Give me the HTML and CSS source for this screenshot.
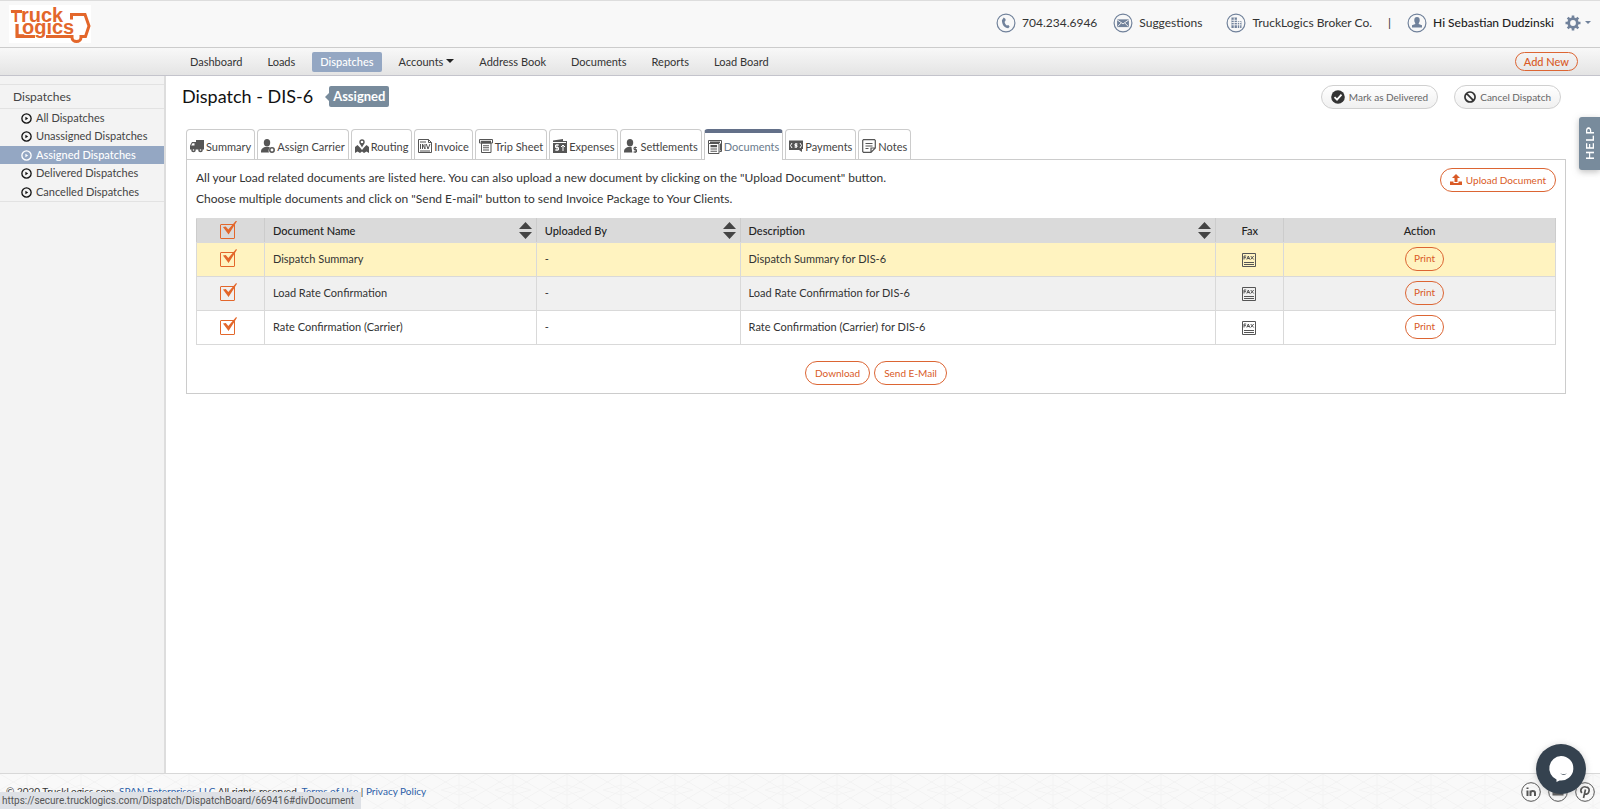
FILE: index.html
```html
<!DOCTYPE html>
<html lang="en">
<head>
<meta charset="utf-8">
<title>TruckLogics - Dispatch DIS-6</title>
<link rel="stylesheet" href="styles.css">
</head>
<body>
<svg class="sprite" aria-hidden="true">
  <symbol id="truck" viewBox="0 0 14 14"><path d="M6 1h8v9.500H6z"/><path d="M0 10.500V6.500L2 3h4v7.500z"/><path class="cut" d="M1.200 6.500l1.300-2.300h2v2.300z"/><circle cx="3.500" cy="11" r="2.300"/><circle cx="10.500" cy="11" r="2.300"/><circle class="cut" cx="3.500" cy="11" r=".8"/><circle class="cut" cx="10.500" cy="11" r=".8"/></symbol>
  <symbol id="carrier" viewBox="0 0 14 14"><ellipse cx="6" cy="3.700" rx="3.200" ry="3.700"/><path d="M0 13.500C0 9.500 1.500 9 4 8h4l1 .8a4 4 0 0 0-1 4.700z"/><circle cx="11" cy="11" r="2.200" fill="none" stroke="currentColor" stroke-width="1.500"/></symbol>
  <symbol id="route" viewBox="0 0 14 14"><path d="M0 8l2.500-2L5 8.500 7 11l2-2.500L11.500 6 14 8v6l-2.500-1.500L9 14l-2-1.500L5 14l-2.500-1.500L0 14z"/><circle cx="7" cy="3" r="2" fill="none" stroke="currentColor" stroke-width="1.400"/><path d="M4.800 4.500h4.400L7 8.500z"/></symbol>
  <symbol id="invoice" viewBox="0 0 14 14"><path d="M.5.500h10l3 3v10H.5zM10.500.500v3h3" fill="none" stroke="currentColor"/><path d="M2 3h6M2 12h10" stroke="currentColor"/><path d="M2.500 5v5M4.500 10V5L7 10V5M8.300 5l1.700 5 2-5" fill="none" stroke="currentColor"/></symbol>
  <symbol id="sheet" viewBox="0 0 14 14"><path d="M.5.500h13v3.500h-1.500v9.500H2.500V4h-2z" fill="none" stroke="currentColor"/><path d="M1.500 1.800h10.500v3H2.500zM4 6.200h6v1H4zM4 8.300h6v1H4zM4 10.500h6v1H4z"/></symbol>
  <symbol id="expense" viewBox="0 0 14 14"><path d="M0 1.500L10 0v2h4v12H0z"/><path class="line" d="M0 3.500h13M6 6H2.500v2.500H5.500V11H2M4 5v7M10 12V6M8 8l2-2 2 2"/></symbol>
  <symbol id="settle" viewBox="0 0 14 14"><ellipse cx="6" cy="3.700" rx="3.200" ry="3.700"/><path d="M0 13.500C0 9.500 1.500 9 4 8h3.500l.8 5.500z"/><path d="M12.800 8.500H10v2h2.500v2.500H9.500M11.200 7.500v6.500" fill="none" stroke="currentColor"/></symbol>
  <symbol id="docs" viewBox="0 0 14 14"><path d="M.5 3.500h10.500v10H.5zM.5 3.500v-3h13v11h-2" fill="none" stroke="currentColor"/><path d="M2 1.500h10v1.500H2zM2.500 5H9v2.200H2.500zM2.500 8.500H9v1H2.500zM2.500 10.700H9v1H2.500zM12 3.500h1v7h-1z"/></symbol>
  <symbol id="pay" viewBox="0 0 14 14"><path d="M0 1.500h14V10h-1v3l-3-2H0z"/><path class="line" d="M3 4L1.500 6.500 3 9M11 4l1.500 2.500L11 9M8.500 5H6v1.500h2V8H5.500M7 4v5"/></symbol>
  <symbol id="note" viewBox="0 0 14 14"><path d="M1.500.700h11l.8.800v7.500l-4.300 4.300H1.500L.7 12.500v-11zM13.300 9H9v4.300M3.500 4.500h7M3.500 7h7M3.500 9.500h3" fill="none" stroke="currentColor" stroke-width="1.200"/></symbol>
  <symbol id="bullet" viewBox="0 0 10 10"><circle cx="5" cy="5" r="4.200" fill="none" stroke="currentColor" stroke-width="1.200"/><path d="M4 3.500L6.500 5 4 6.500z"/></symbol>
  <symbol id="sort" viewBox="0 0 13 17"><path d="M6.500 0l6.500 7H0zM0 10h13l-6.500 7z"/></symbol>
  <symbol id="fax" viewBox="0 0 14 14"><path d="M.5.500h13v13H.5z" fill="none" stroke="currentColor"/><path d="M2 6.500V3h2.200M2 4.700h2M4.800 6.500L6.300 3l1.500 3.500M5.300 5.500h2M8.700 3l3 3.500M11.700 3l-3 3.500M2 9.500h10M2 11.500h10" fill="none" stroke="currentColor"/></symbol>
</svg>

<header class="top">
  <a class="logo" href="#" aria-label="TruckLogics">
    <svg viewBox="0 0 82 38" width="82" height="38"><rect class="logo-bg" width="82" height="38"/><text x="2" y="17"><tspan class="cap">T</tspan><tspan x="12">ruck</tspan></text><text x="6" y="31"><tspan class="cap">L</tspan><tspan x="13" y="29">ogics</tspan></text><path d="M2 6.500h11M8 19v12.500h18M37 31.500h26v1a4.500 4 0 0 0 9 0v-1h4.500L80 21 76 9.500H62.500v5"/></svg>
  </a>
  <div class="links">
    <a class="link phone" href="#"><svg class="round" viewBox="0 0 22 22"><circle class="ring" cx="11" cy="11" r="9.800"/><path d="M8.500 5l2 1.500v2l-1 1.200c0 1.500 1 3 2.500 4l1.600-.4 1.400 1.700-1.500 1.800c-4 0-7-4-7-8.800z"/></svg>704.234.6946</a>
    <a class="link suggest" href="#"><svg class="round" viewBox="0 0 22 22"><circle class="ring" cx="11" cy="11" r="9.800"/><path d="M4.500 7h13v8.500h-13z"/><path class="line" d="M4.500 7.500L11 12l6.500-4.500M5 15l4-4M17 15l-4-4"/></svg>Suggestions</a>
    <a class="link company" href="#"><svg class="round" viewBox="0 0 22 22"><circle class="ring" cx="11" cy="11" r="9.800"/><path d="M6 5h6v11.500H6zM13 9h4v7.500h-4z"/><path class="line" d="M6 8h6M6 10.500h11M6 13h11M9 5v11.500M15 9v7.500"/></svg>TruckLogics Broker Co.</a>
    <span class="bar">|</span>
    <a class="link user" href="#"><svg class="round" viewBox="0 0 22 22"><circle class="ring" cx="11" cy="11" r="9.800"/><path d="M8 8a3 3.500 0 0 1 6 0c0 2-1 2.500-1.200 4l3.700 1.500v2.500h-11v-2.500L9.200 12C9 10.500 8 10 8 8z"/></svg>Hi Sebastian Dudzinski</a>
    <button class="gear" type="button" aria-label="Settings"><svg viewBox="0 0 16 16" width="16" height="16"><circle cx="8" cy="8" r="4.300" fill="none" stroke="currentColor" stroke-width="2.800"/><path d="M8 .5v3M8 12.500v3M.5 8h3M12.500 8h3M2.700 2.700l2 2M11.300 11.300l2 2M2.700 13.300l2-2M11.300 4.700l2-2" stroke="currentColor" stroke-width="2.600"/></svg><i class="caret"></i></button>
  </div>
</header>

<nav class="nav" aria-label="Main">
  <a href="#">Dashboard</a><a href="#">Loads</a><a class="on" href="#">Dispatches</a><a href="#">Accounts<i class="caret"></i></a><a href="#">Address Book</a><a href="#">Documents</a><a href="#">Reports</a><a href="#">Load Board</a>
  <button class="pill add" type="button">Add New</button>
</nav>

<div class="body">
  <aside class="side">
    <h2>Dispatches</h2>
    <ul>
      <li><a href="#"><svg><use href="#bullet"/></svg>All Dispatches</a></li>
      <li><a href="#"><svg><use href="#bullet"/></svg>Unassigned Dispatches</a></li>
      <li><a class="on" href="#"><svg><use href="#bullet"/></svg>Assigned Dispatches</a></li>
      <li><a href="#"><svg><use href="#bullet"/></svg>Delivered Dispatches</a></li>
      <li><a href="#"><svg><use href="#bullet"/></svg>Cancelled Dispatches</a></li>
    </ul>
  </aside>
  <main class="main">
    <div class="title">
      <h1>Dispatch - DIS-6</h1><span class="badge">Assigned</span>
      <div class="acts">
        <button class="pill grey" type="button"><svg viewBox="0 0 14 14" width="14" height="14"><circle cx="7" cy="7" r="6.800"/><path class="tick" d="M3.500 7.200l2.500 2.500 4.500-5"/></svg>Mark as Delivered</button>
        <button class="pill grey" type="button"><svg viewBox="0 0 12 12" width="12" height="12"><path d="M2.200 2.200l7.600 7.600M6 1a5 5 0 1 0 .01 0z" fill="none" stroke="currentColor" stroke-width="1.700"/></svg>Cancel Dispatch</button>
      </div>
    </div>
    <div class="tabs">
      <a href="#"><svg><use href="#truck"/></svg>Summary</a><a href="#"><svg><use href="#carrier"/></svg>Assign Carrier</a><a href="#"><svg><use href="#route"/></svg>Routing</a><a href="#"><svg><use href="#invoice"/></svg>Invoice</a><a href="#"><svg><use href="#sheet"/></svg>Trip Sheet</a><a href="#"><svg><use href="#expense"/></svg>Expenses</a><a href="#"><svg><use href="#settle"/></svg>Settlements</a><a class="on" href="#"><svg><use href="#docs"/></svg>Documents</a><a href="#"><svg><use href="#pay"/></svg>Payments</a><a href="#"><svg><use href="#note"/></svg>Notes</a>
    </div>
    <section class="panel">
      <div class="intro">
        <p>All your Load related documents are listed here. You can also upload a new document by clicking on the "Upload Document" button.<br>Choose multiple documents and click on "Send E-mail" button to send Invoice Package to Your Clients.</p>
        <button class="pill upload" type="button"><svg viewBox="0 0 12 12" width="12" height="12"><path d="M6 0l4 4H7.500v4h-3V4H2zM0 7.500h3.500V9h5V7.500H12V11H0z"/></svg>Upload Document</button>
      </div>
      <table>
        <colgroup><col class="c5"><col class="c20"><col class="c15"><col class="c35"><col class="c5"><col class="c20"></colgroup>
        <thead><tr><th class="mid"><input type="checkbox" checked aria-label="Select all"></th><th><div class="sortable">Document Name<svg><use href="#sort"/></svg></div></th><th><div class="sortable">Uploaded By<svg><use href="#sort"/></svg></div></th><th><div class="sortable">Description<svg><use href="#sort"/></svg></div></th><th class="mid">Fax</th><th class="mid">Action</th></tr></thead>
        <tbody>
          <tr class="hot"><td class="mid"><input type="checkbox" checked aria-label="Dispatch Summary"></td><td>Dispatch Summary</td><td>-</td><td>Dispatch Summary for DIS-6</td><td class="mid"><svg class="fax"><use href="#fax"/></svg></td><td class="mid"><button class="pill" type="button">Print</button></td></tr>
          <tr class="alt"><td class="mid"><input type="checkbox" checked aria-label="Load Rate Confirmation"></td><td>Load Rate Confirmation</td><td>-</td><td>Load Rate Confirmation for DIS-6</td><td class="mid"><svg class="fax"><use href="#fax"/></svg></td><td class="mid"><button class="pill" type="button">Print</button></td></tr>
          <tr><td class="mid"><input type="checkbox" checked aria-label="Rate Confirmation (Carrier)"></td><td>Rate Confirmation (Carrier)</td><td>-</td><td>Rate Confirmation (Carrier) for DIS-6</td><td class="mid"><svg class="fax"><use href="#fax"/></svg></td><td class="mid"><button class="pill" type="button">Print</button></td></tr>
        </tbody>
      </table>
      <div class="send"><button class="pill" type="button">Download</button><button class="pill" type="button">Send E-Mail</button></div>
    </section>
  </main>
</div>

<footer class="foot">
  <svg class="pattern" aria-hidden="true"><defs><pattern id="star" width="54" height="32" patternUnits="userSpaceOnUse"><path d="M27 0v32M0 0l54 32M54 0L0 32M0 16l27-16 27 16-27 16zM9 16l18-5 18 5-18 5z"/></pattern></defs><rect width="100%" height="100%" fill="url(#star)"/></svg>
  <p>© 2020 TruckLogics.com, <a href="#">SPAN Enterprises LLC</a> All rights reserved. <a href="#">Terms of Use</a> | <a href="#">Privacy Policy</a></p>
  <div class="social">
    <a href="#" aria-label="LinkedIn"><svg viewBox="0 0 20 20"><circle cx="10" cy="10" r="9.300"/><path d="M6.500 8.500V14M6.500 5.500v1.500M9.500 14V8.500M9.500 11c0-2.500 4.500-3 4.500 0v3" stroke-width="2"/></svg></a>
    <a href="#" aria-label="YouTube"><svg viewBox="0 0 20 20"><circle cx="10" cy="10" r="9.300"/><path d="M6 8h8v4H6z" stroke-width="3"/></svg></a>
    <a href="#" aria-label="Pinterest"><svg viewBox="0 0 20 20"><circle cx="10" cy="10" r="9.300"/><path d="M6.800 11C4 7 8 4.500 10.500 4.800c4 .3 4 3.200 3.300 5.200-.8 2.500-3.500 2.800-4.300 1M10.500 7.500L8.500 16" stroke-width="1.700"/></svg></a>
  </div>
</footer>

<button class="help" type="button">HELP</button>
<button class="chat" type="button" aria-label="Chat"><svg viewBox="0 0 50 50" width="50" height="50"><path d="M25 12a12.300 12.300 0 1 1-1.500 24.500L20.500 38v-2.500A12.300 12.300 0 0 1 25 12z"/><path class="smile" d="M24 29q4 2.500 7 0-3 4-7 0z"/></svg></button>
<div class="status">https://secure.trucklogics.com/Dispatch/DispatchBoard/669416#divDocument</div>
</body>
</html>
```
FILE: styles.css
```css
* { box-sizing: border-box; }
body {
  margin: 0; min-height: 100vh; display: flex; flex-direction: column;
  font-family: Lato, "Liberation Sans", sans-serif; font-size: 11px; color: #333; background: #fff;
}
a { color: inherit; text-decoration: none; }
button { font-family: inherit; cursor: pointer; }
svg { fill: currentColor; flex: none; }
.sprite { position: absolute; width: 0; height: 0; }
.cut { fill: #fff; }
.line { fill: none; stroke: #fff; stroke-width: 1; }
.caret { display: inline-block; border: 4px solid transparent; border-top-color: #222; border-bottom: 0; }

.top {
  display: flex; justify-content: space-between; height: 48px; padding: 4px 9px 0;
  background: #f8f8f8; border-top: 1px solid #ddd; border-bottom: 1px solid #ccc;
}
.logo svg { display: block; overflow: visible; fill: #e3672b; font: bold 20px "Liberation Sans", sans-serif; }
.logo .cap { font-size: 16px; }
.logo path { fill: none; stroke: #e3672b; stroke-width: 3; }
.logo .logo-bg { fill: #fff; }
.links { display: flex; align-items: center; height: 35px; font-size: 12px; color: #333; }
.link { display: flex; align-items: center; gap: 6px; }
.round { width: 20px; height: 20px; color: #71829b; }
.ring { fill: none; stroke: #71829b; stroke-width: 1.300; }
.round .line { stroke: #f8f8f8; }
.suggest { margin-left: 16px; }
.company { margin-left: 24px; }
.bar { margin: 0 16px; }
.user { font-weight: 500; color: #222; }
.gear { display: flex; align-items: center; gap: 4px; margin-left: 11px; padding: 0; border: 0; background: none; color: #71829b; }
.gear .caret { border-width: 3px; border-bottom: 0; border-top-color: #71829b; }

.nav {
  display: flex; align-items: center; gap: 9px; height: 28px; padding: 0 22px 0 182px;
  background: linear-gradient(#f8f8f8, #e4e4e4); border-bottom: 1px solid #c4c4cc;
}
.nav a { display: flex; align-items: center; gap: 3px; height: 20px; padding: 0 8px 1px; border-radius: 2px; }
.nav .on { color: #fff; background: #94a7c3; font-weight: 500; }

.pill {
  display: inline-flex; align-items: center; justify-content: center; gap: 4px; height: 24px; padding: 0 9px 1px;
  border: 1px solid #dc6533; border-radius: 12px; background: transparent; color: #d95a26; font-size: 10px;
}
.nav .add { height: 19px; margin-left: auto; padding: 0 8px 1px; font-weight: 500; font-size: 11px; }

.body { display: flex; flex: 1; }
.side { width: 166px; padding-top: 8px; background: #f3f3f3; border-right: 2px solid #ddd; }
.side h2 { margin: 0; padding: 0 13px; font-size: 12px; line-height: 23px; font-weight: normal; color: #444; border: 1px solid #e2e2e2; border-width: 1px 0; }
.side ul { margin: 0; padding: 0; list-style: none; border-bottom: 1px solid #e2e2e2; }
.side a { display: flex; align-items: center; gap: 4px; padding-left: 21px; line-height: 18px; color: #444; }
.side li:nth-child(even) a { padding-bottom: 1px; }
.side svg { width: 11px; height: 11px; color: #111; }
.side .on { color: #fff; background: #94a7c3; font-weight: 500; }
.side .on svg { color: #fff; }

.main { flex: 1; min-width: 0; padding: 8px 34px 16px 16px; }
.title { display: flex; align-items: flex-start; height: 45px; }
h1 { margin: 0 16px 0 0; font-size: 18px; line-height: 24px; font-weight: normal; color: #111; }
.badge { position: relative; margin-top: 2px; padding: 0 4px; border-radius: 2px; background: #788b9c; color: #fff; font-size: 13px; line-height: 21px; font-weight: bold; }
.badge::before { content: ""; position: absolute; left: -4px; top: 6px; border: 5px solid transparent; border-right-color: #788b9c; border-left: 0; }
.acts { display: flex; gap: 16px; margin: 1px 5px 0 auto; }
.grey { border-color: #d0d0d0; background: linear-gradient(#fff, #f0f0f0); color: #666; }
.grey svg { color: #333; }
.tick { fill: none; stroke: #fff; stroke-width: 1.800; }

.tabs { display: flex; gap: 2px; margin-left: 4px; }
.tabs a {
  display: flex; align-items: center; gap: 2px; height: 30px; padding: 3px 3px 0;
  border: 1px solid #ccc; border-bottom: 0; border-radius: 4px 4px 0 0; white-space: nowrap; color: #444;
}
.tabs svg { width: 14px; height: 14px; color: #555; }
.tabs .on { height: 31px; margin-bottom: -1px; padding-top: 0; border-top: 4px solid #637089; background: #fff; color: #6a7a8c; z-index: 1; }

.panel { margin-left: 4px; padding: 8px 9px; border: 1px solid #ccc; }
.intro { display: flex; justify-content: space-between; align-items: flex-start; }
.intro p { margin: -1px 0 9px; font-size: 12px; line-height: 21px; }
table { width: 100%; table-layout: fixed; border-collapse: collapse; }
.c5 { width: 5%; } .c15 { width: 15%; } .c20 { width: 20%; } .c35 { width: 35%; }
th, td { height: 34px; padding: 0 8px 2px; border: 1px solid #d9d9d9; text-align: left; font-weight: 400; }
th { height: 24px; padding-bottom: 1px; background: #dadada; border-color: #dadada #ccc; font-weight: 500; color: #222; }
.mid { text-align: center; }
td .pill { padding: 0 8px 1px; margin-left: 10px; vertical-align: middle; }
.sortable { display: flex; align-items: center; justify-content: space-between; margin-right: -4px; }
.sortable svg { width: 13px; height: 17px; color: #444; }
.hot td { background: #fff3c0; }
.alt td { background: #f0f0f0; }
.fax { width: 14px; height: 14px; margin: 2px 2px 0 0; vertical-align: middle; color: #555; }
input[type="checkbox"] {
  appearance: none; position: relative; width: 15px; height: 15px; margin: 2px 6px 0 0;
  border: 1px solid #e3672b; border-radius: 1px; vertical-align: middle;
}
input:checked::before {
  content: ""; position: absolute; left: 2px; top: -4px; width: 14px; height: 14px; background: #e3672b;
  clip-path: polygon(0 46%, 20% 42%, 38% 64%, 94% 0, 100% 6%, 40% 100%);
}
.send { display: flex; justify-content: center; gap: 4px; padding: 16px 0 0; }

.foot { position: relative; display: flex; justify-content: space-between; height: 36px; padding: 8px 5px 0 6px; overflow: hidden; background: #f9f9f9; border-top: 1px solid #d8d8d8; font-size: 10px; line-height: 18px; }
.foot p { position: relative; margin: 0; }
.foot a { color: #2b5ea8; }
.pattern { position: absolute; inset: 0; width: 100%; height: 100%; }
.pattern path { fill: none; stroke: #f3f3f3; }
.social { position: relative; display: flex; gap: 7px; }
.social svg { display: block; width: 20px; height: 20px; fill: none; stroke: #555; }

.help {
  position: fixed; right: 0; top: 117px; width: 21px; height: 53px; padding: 0; border: 0;
  border-radius: 0 3px 3px 0; background: #788b9c; color: #fff; font-size: 12px; font-weight: bold;
  letter-spacing: 1px; writing-mode: vertical-rl; transform: rotate(180deg); box-shadow: 0 -2px 6px #8888;
}
.chat { position: fixed; right: 14px; bottom: 15px; width: 50px; height: 50px; padding: 0; border: 0; border-radius: 50%; background: #35424f; color: #fff; box-shadow: 0 1px 6px #8886; }
.chat svg { display: block; }
.smile { fill: #35424f; }
.status { position: fixed; left: 0; bottom: 0; padding: 0 7px 0 2px; background: #dee1e6; color: #555; font: 10px/17px Roboto, sans-serif; }
```
